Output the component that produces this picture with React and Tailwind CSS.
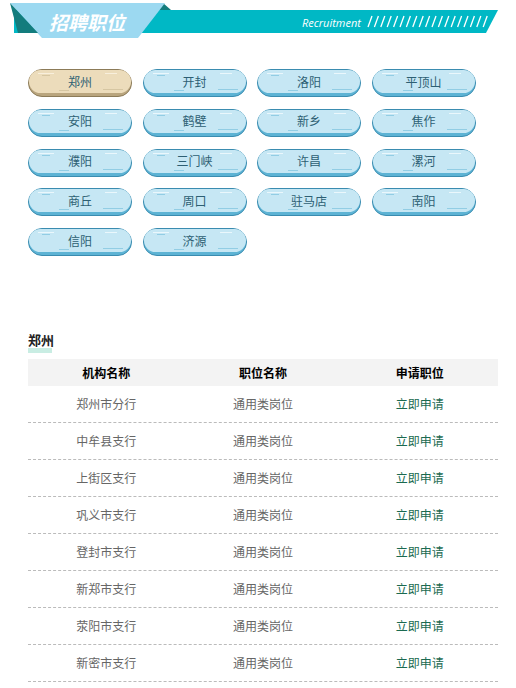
import React from 'react';

const cities = [
  '郑州', '开封', '洛阳', '平顶山',
  '安阳', '鹤壁', '新乡', '焦作',
  '濮阳', '三门峡', '许昌', '漯河',
  '商丘', '周口', '驻马店', '南阳',
  '信阳', '济源',
];

const branches = [
  '郑州市分行', '中牟县支行', '上街区支行', '巩义市支行',
  '登封市支行', '新郑市支行', '荥阳市支行', '新密市支行',
];

const font = { fontFamily: '"Noto Sans CJK SC", "Noto Sans", sans-serif' };

function Banner() {
  return (
    <div className="relative h-[40px]">
      <svg className="absolute inset-0" width="516" height="40" viewBox="0 0 516 40">
        <polygon points="14,10 498,10 486,33 14,33" fill="#00b8c5" />
        <polygon points="155,10 163,3 171,10" fill="#137c7d" />
        <polygon points="10,3 165,3 138,38 42,38" fill="#9cd9f1" />
        <polygon points="10,3 38,33 18,33" fill="#137c7d" />
        {Array.from({ length: 19 }).map((_, i) => (
          <line
            key={i}
            x1={372 + i * 6.4}
            y1={16}
            x2={368 + i * 6.4}
            y2={27}
            stroke="#ffffff"
            strokeWidth="1.3"
          />
        ))}
      </svg>
      <div className="relative flex h-full items-center">
        <span
          className="ml-[49px] mt-[2px] text-[19px] font-bold italic leading-none text-white"
          style={font}
        >
          招聘职位
        </span>
        <span
          className="ml-[177px] mt-[4px] text-[11px] italic leading-none text-white"
          style={{ fontFamily: '"Open Sans", sans-serif' }}
        >
          Recruitment
        </span>
      </div>
    </div>
  );
}

function CityButton({ name, active }) {
  const outer = active ? 'border-[#8c7b58] bg-[#b9a57e]' : 'border-[#3a8cb0] bg-[#5db3d4]';
  const face = active ? 'bg-[#ecdcbb]' : 'bg-[#c6e7f4]';
  const streak = active ? 'bg-[#f8efdc]' : 'bg-[#eaf7fc]';
  const dark = active ? 'bg-[#d6c6a2]' : 'bg-[#92cde4]';
  return (
    <div className={`relative h-[28px] w-[104px] rounded-full border pb-[3px] ${outer}`}>
      <div className={`relative flex h-full items-center justify-center overflow-hidden rounded-full ${face}`}>
        <span className={`absolute left-[9px] top-[3px] h-[1px] w-[16px] ${streak}`} />
        <span className={`absolute left-[13px] top-[5px] h-[1px] w-[8px] ${dark}`} />
        <span className={`absolute right-[14px] top-[3px] h-[1px] w-[12px] ${streak}`} />
        <span className={`absolute right-[8px] bottom-[3px] h-[1px] w-[20px] ${dark}`} />
        <span className={`absolute left-[30px] bottom-[2px] h-[1px] w-[10px] ${dark}`} />
        <span className="relative text-[12px] text-[#2d5f73]" style={font}>{name}</span>
      </div>
    </div>
  );
}

export default function App() {
  return (
    <div className="min-h-screen w-[516px] bg-white" style={font}>
      <Banner />

      <div className="ml-[28px] mt-[29px] grid grid-cols-[repeat(4,104px)] gap-x-[10.5px] gap-y-[11.75px]">
        {cities.map((c, i) => (
          <CityButton key={c} name={c} active={i === 0} />
        ))}
      </div>

      <div className="ml-[28px] mt-[70px]">
        <div className="inline-flex flex-col">
          <span className="text-[13px] font-bold leading-[15px] text-[#222]">郑州</span>
          <span className="mt-[1px] h-[5px] w-[24px] bg-[#c9ede3]" />
        </div>

        <div className="mt-[6px] w-[470px]">
          <div className="grid h-[27px] grid-cols-3 items-center bg-[#f3f3f3] text-center text-[12px] font-bold text-black">
            <span>机构名称</span>
            <span>职位名称</span>
            <span>申请职位</span>
          </div>
          {branches.map((b) => (
            <div
              key={b}
              className="grid h-[37px] grid-cols-3 items-center border-b border-dashed border-[#bbbbbb] text-center text-[12px] text-[#666]"
            >
              <span>{b}</span>
              <span>通用类岗位</span>
              <span className="text-[#1a6a50]">立即申请</span>
            </div>
          ))}
        </div>
      </div>
    </div>
  );
}
